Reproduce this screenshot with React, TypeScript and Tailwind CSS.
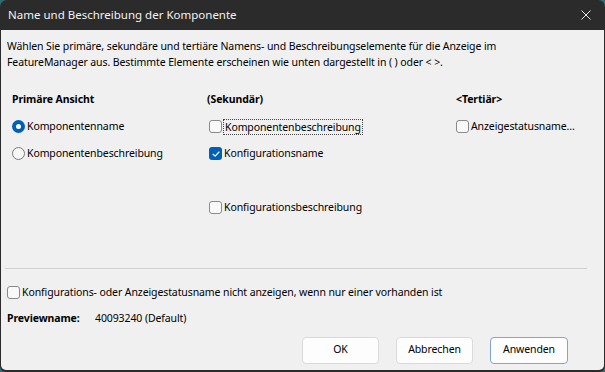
import React from 'react'

const font = { fontFamily: '"Noto Sans", "Open Sans", Arial, sans-serif' }

function Radio({ checked = false }: { checked?: boolean }) {
  if (checked) {
    return (
      <span className="flex h-[13px] w-[13px] shrink-0 items-center justify-center rounded-full bg-[#005fb8]">
        <span className="h-[5px] w-[5px] rounded-full bg-white" />
      </span>
    )
  }
  return <span className="h-[13px] w-[13px] shrink-0 rounded-full border border-[#7a7a7a] bg-[#f7f7f7]" />
}

function Checkbox({ checked = false }: { checked?: boolean }) {
  if (checked) {
    return (
      <span className="flex h-[13px] w-[13px] shrink-0 items-center justify-center rounded-[3px] bg-[#005fb8]">
        <svg viewBox="0 0 12 12" className="h-[10px] w-[10px]" fill="none" stroke="white" strokeWidth="1.4" strokeLinecap="round" strokeLinejoin="round">
          <path d="M2.5 6.3 5 8.6 9.6 3.6" />
        </svg>
      </span>
    )
  }
  return <span className="h-[13px] w-[13px] shrink-0 rounded-[3px] border border-[#8a8a8a] bg-[#f9f9f9]" />
}

function Row({ children }: { children: React.ReactNode }) {
  return <div className="flex h-[27px] items-center gap-[1px]">{children}</div>
}

export default function App() {
  return (
    <div className="h-[372px] w-[605px] overflow-hidden bg-[#2c6e70] text-[10.5px] tracking-[-0.1px] text-black" style={font}>
      <div className="flex h-full w-full flex-col overflow-hidden rounded-t-[7px] rounded-b-[6px] bg-[#2b2b2b]">
        {/* Title bar */}
        <div className="flex h-[30px] shrink-0 items-center justify-between pl-[8px] pr-[14px] text-[11.5px] tracking-normal text-[#f2f2f2]">
          <span>Name und Beschreibung der Komponente</span>
          <svg viewBox="0 0 10 10" className="h-[10px] w-[10px]" stroke="#e6e6e6" strokeWidth="1" fill="none">
            <path d="M0.5 0.5 9.5 9.5M9.5 0.5 0.5 9.5" />
          </svg>
        </div>

        {/* Body */}
        <div className="mx-[1px] mb-[2px] flex flex-1 flex-col rounded-b-[5px] bg-[#f0f0f0]">
          <p className="pl-[6px] pt-[8px] leading-[16px]">
            Wählen Sie primäre, sekundäre und tertiäre Namens- und Beschreibungselemente für die Anzeige im
            <br />
            FeatureManager aus. Bestimmte Elemente erscheinen wie unten dargestellt in ( ) oder &lt; &gt;.
          </p>

          <div className="mt-[20px] flex pl-[11px]">
            <div className="w-[195px]">
              <div className="flex h-[20px] items-center font-bold">Primäre Ansicht</div>
              <div className="mt-[3px]">
                <Row>
                  <Radio checked />
                  <span className="pl-[1px]">Komponentenname</span>
                </Row>
                <Row>
                  <Radio />
                  <span className="pl-[1px]">Komponentenbeschreibung</span>
                </Row>
              </div>
            </div>

            <div className="w-[249px]">
              <div className="flex h-[20px] items-center font-bold">(Sekundär)</div>
              <div className="mt-[3px] pl-[2px]">
                <Row>
                  <Checkbox />
                  <span className="border border-dotted border-[#444] px-[1px] leading-[14px]">Komponentenbeschreibung</span>
                </Row>
                <Row>
                  <Checkbox checked />
                  <span className="pl-[1px]">Konfigurationsname</span>
                </Row>
                <div className="h-[27px]" />
                <Row>
                  <Checkbox />
                  <span className="pl-[1px]">Konfigurationsbeschreibung</span>
                </Row>
              </div>
            </div>

            <div className="flex-1">
              <div className="flex h-[20px] items-center font-bold">&lt;Tertiär&gt;</div>
              <div className="mt-[3px]">
                <Row>
                  <Checkbox />
                  <span className="pl-[1px]">Anzeigestatusname...</span>
                </Row>
              </div>
            </div>
          </div>

          <div className="ml-[4px] mr-[17px] mt-[47px] h-px bg-[#d0d0d0]" />

          <div className="mt-[16px] flex items-center gap-[1px] pl-[6px]">
            <Checkbox />
            <span className="pl-[1px]">Konfigurations- oder Anzeigestatusname nicht anzeigen, wenn nur einer vorhanden ist</span>
          </div>

          <div className="mt-[10px] flex items-center pl-[6px]">
            <span className="w-[88px] font-bold">Previewname:</span>
            <span>40093240 (Default)</span>
          </div>

          <div className="mt-[10px] flex justify-end gap-[17px] pr-[36px]">
            <button className="h-[27px] w-[77px] rounded-[4px] border border-[#dadada] bg-[#fdfdfd]">OK</button>
            <button className="h-[27px] w-[77px] rounded-[4px] border border-[#dadada] bg-[#fdfdfd]">Abbrechen</button>
            <button className="h-[27px] w-[78px] rounded-[4px] border border-[#7fa7cc] bg-[#fdfdfd]">Anwenden</button>
          </div>
        </div>
      </div>
    </div>
  )
}
